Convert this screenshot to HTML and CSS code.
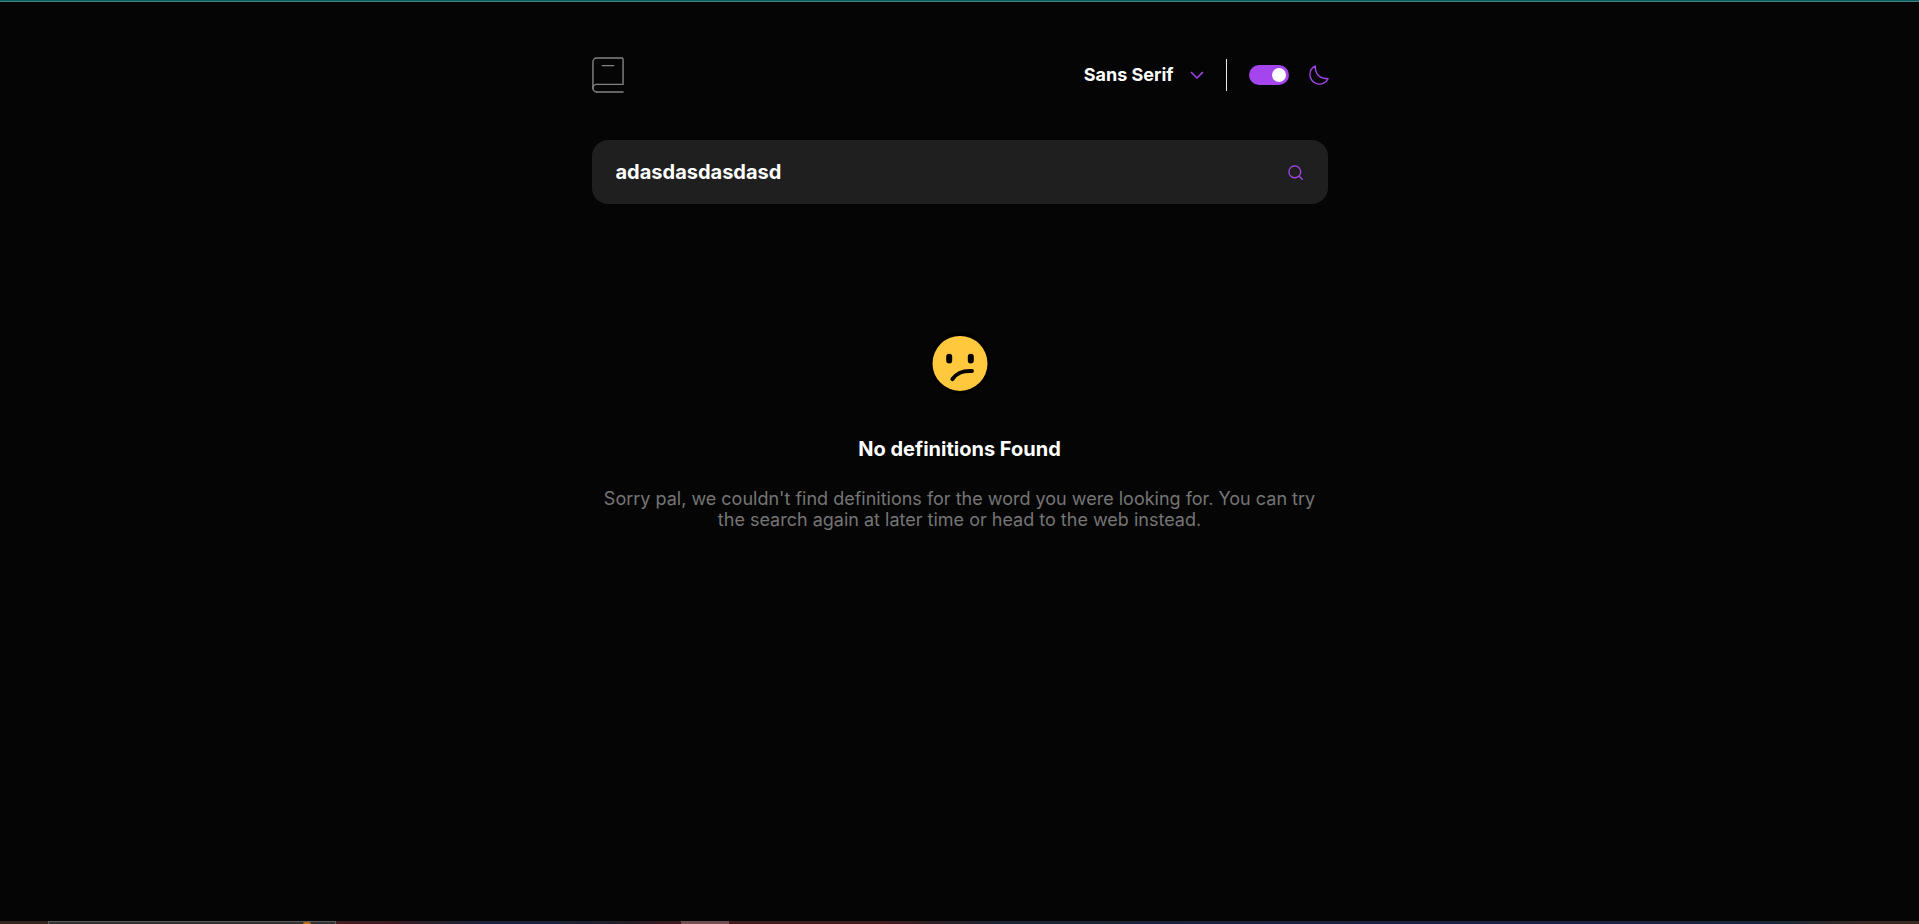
FILE: index.html
```html
<!DOCTYPE html>
<html lang="en">
<head>
<meta charset="utf-8">
<meta name="viewport" content="width=device-width, initial-scale=1">
<title>Dictionary</title>
<link rel="stylesheet" href="styles.css">
</head>
<body>
<div class="edge-top"></div>
<div class="container">
  <header class="header">
    <a class="logo" href="#" aria-label="Dictionary home">
      <svg width="32" height="36" viewBox="0 0 34 38" fill="none" stroke="#838383" stroke-linecap="round" stroke-width="1.5"><path d="M1 33V5a4 4 0 0 1 4-4h26.8A1.2 1.2 0 0 1 33 2.2v26.228M5 29h28M5 37h28"/><path stroke-linejoin="round" d="M5 37a4 4 0 1 1 0-8"/><path d="M11 9h12"/></svg>
    </a>
    <div class="controls">
      <button class="font-button" type="button">Sans Serif
        <svg width="14" height="8" viewBox="0 0 14 8" fill="none" stroke="#a445ed" stroke-width="1.5"><path d="m1 1 6 6 6-6"/></svg>
      </button>
      <span class="divider"></span>
      <label class="theme">
        <input class="toggle" type="checkbox" role="switch" aria-label="Dark mode" checked>
        <svg width="20" height="20" viewBox="0 0 22 22" fill="none" stroke="#a445ed" stroke-width="1.5" stroke-linecap="round" stroke-linejoin="round"><path d="M1 10.449a10.544 10.544 0 0 0 19.993 4.686C11.544 15.135 6.858 10.448 6.858 1A10.545 10.545 0 0 0 1 10.449Z"/></svg>
      </label>
    </div>
  </header>
  <form class="search">
    <input class="search-input" type="text" aria-label="Search for a word" value="adasdasdasdasd">
    <button class="search-button" type="button" aria-label="Search">
      <svg width="16" height="16" viewBox="0 0 18 18" fill="none" stroke="#a445ed" stroke-width="1.5"><path d="m12.663 12.663 3.887 3.887M1 7.664a6.665 6.665 0 1 0 13.33 0 6.665 6.665 0 0 0-13.33 0Z"/></svg>
    </button>
  </form>
  <main class="empty">
    <svg class="face" width="64" height="64" viewBox="0 0 64 64"><circle cx="32" cy="32" r="31" fill="#000"/><circle cx="32" cy="32.4" r="27.5" fill="#ffc83d"/><g fill="none" stroke="#000" stroke-linecap="round"><path stroke-width="6" d="M21.2 25.8v3.6M42.8 25.8v3.6"/><path stroke-width="4" d="M24.4 48.2c4.6-6.6 10.2-8.6 19.5-8.2"/></g></svg>
    <h1 class="title">No definitions Found</h1>
    <p class="message">Sorry pal, we couldn't find definitions for the word you were looking for. You can try the search again at later time or head to the web instead.</p>
  </main>
</div>
<div class="edge-bottom"><span class="tab"><span class="spark"></span></span><span class="tab-small"></span></div>
</body>
</html>
```
FILE: styles.css
```css
* {
  box-sizing: border-box;
}

body {
  margin: 0;
  min-height: 100vh;
  display: flex;
  flex-direction: column;
  background: #050505;
  color: #fff;
  font-family: Inter, "Liberation Sans", sans-serif;
}

.edge-top {
  height: 2px;
  background: #0d5c63;
  border-bottom: 1px solid #3a7f83;
}

.container {
  width: 100%;
  max-width: 736px;
  margin: 0 auto;
  padding-top: 55px;
  flex: 1;
}

.header,
.controls,
.font-button,
.theme,
.search {
  display: flex;
  align-items: center;
}

.header {
  justify-content: space-between;
}

.logo,
.header svg,
.search svg {
  display: block;
}

.controls {
  gap: 22px;
  margin-right: -1px;
}

.font-button {
  gap: 16px;
  padding: 0;
  border: 0;
  background: none;
  color: #fff;
  font: bold 18px/24px Inter, "Liberation Sans", sans-serif;
}

.divider {
  width: 1px;
  height: 32px;
  background: #e9e9e9;
}

.theme {
  gap: 20px;
}

.toggle {
  appearance: none;
  display: flex;
  justify-content: flex-end;
  align-items: center;
  width: 40px;
  height: 20px;
  margin: 0;
  padding: 3px;
  border-radius: 10px;
  background: #a445ed;
}

.toggle::before {
  content: "";
  width: 14px;
  height: 14px;
  border-radius: 50%;
  background: #fff;
}

.search {
  height: 64px;
  margin-top: 47px;
  padding: 0 24px;
  border-radius: 16px;
  background: #1f1f1f;
}

.search-input {
  flex: 1;
  min-width: 0;
  padding: 0;
  border: 0;
  outline: 0;
  background: none;
  color: #fff;
  font: bold 20px/24px Inter, "Liberation Sans", sans-serif;
}

.search-button {
  padding: 2px 0 0;
  border: 0;
  background: none;
}

.empty {
  margin-top: 127px;
  text-align: center;
}

.face {
  display: block;
  margin: 0 auto;
}

.title {
  margin: 42px 0 0;
  font-size: 20px;
  line-height: 24px;
}

.message {
  margin: 27px 0 0;
  color: #757575;
  font-size: 18px;
  line-height: 21px;
}

.edge-bottom {
  display: flex;
  height: 3px;
  padding-left: 48px;
  background: linear-gradient(90deg, #35261f 0, #35261f 2%, #421c1e 18%, #3d1b20 20%, #1b2438 25%, #1b2438 29%, #211d2a 32%, #401c1c 36%, #401c1c 46%, #1b2533 52%, #1b2340 80%, #1b2838 93%, #3a2822 97%, #3a2822 100%);
}

.tab {
  width: 288px;
  margin-right: 345px;
  border: 1px solid #5c5c5c;
  border-bottom: 0;
  background: #333;
}

.spark {
  display: block;
  width: 8px;
  height: 2px;
  margin-left: 254px;
  border-radius: 4px 4px 0 0;
  background: #c06c18;
}

.tab-small {
  width: 48px;
  background: #705050;
}
```
